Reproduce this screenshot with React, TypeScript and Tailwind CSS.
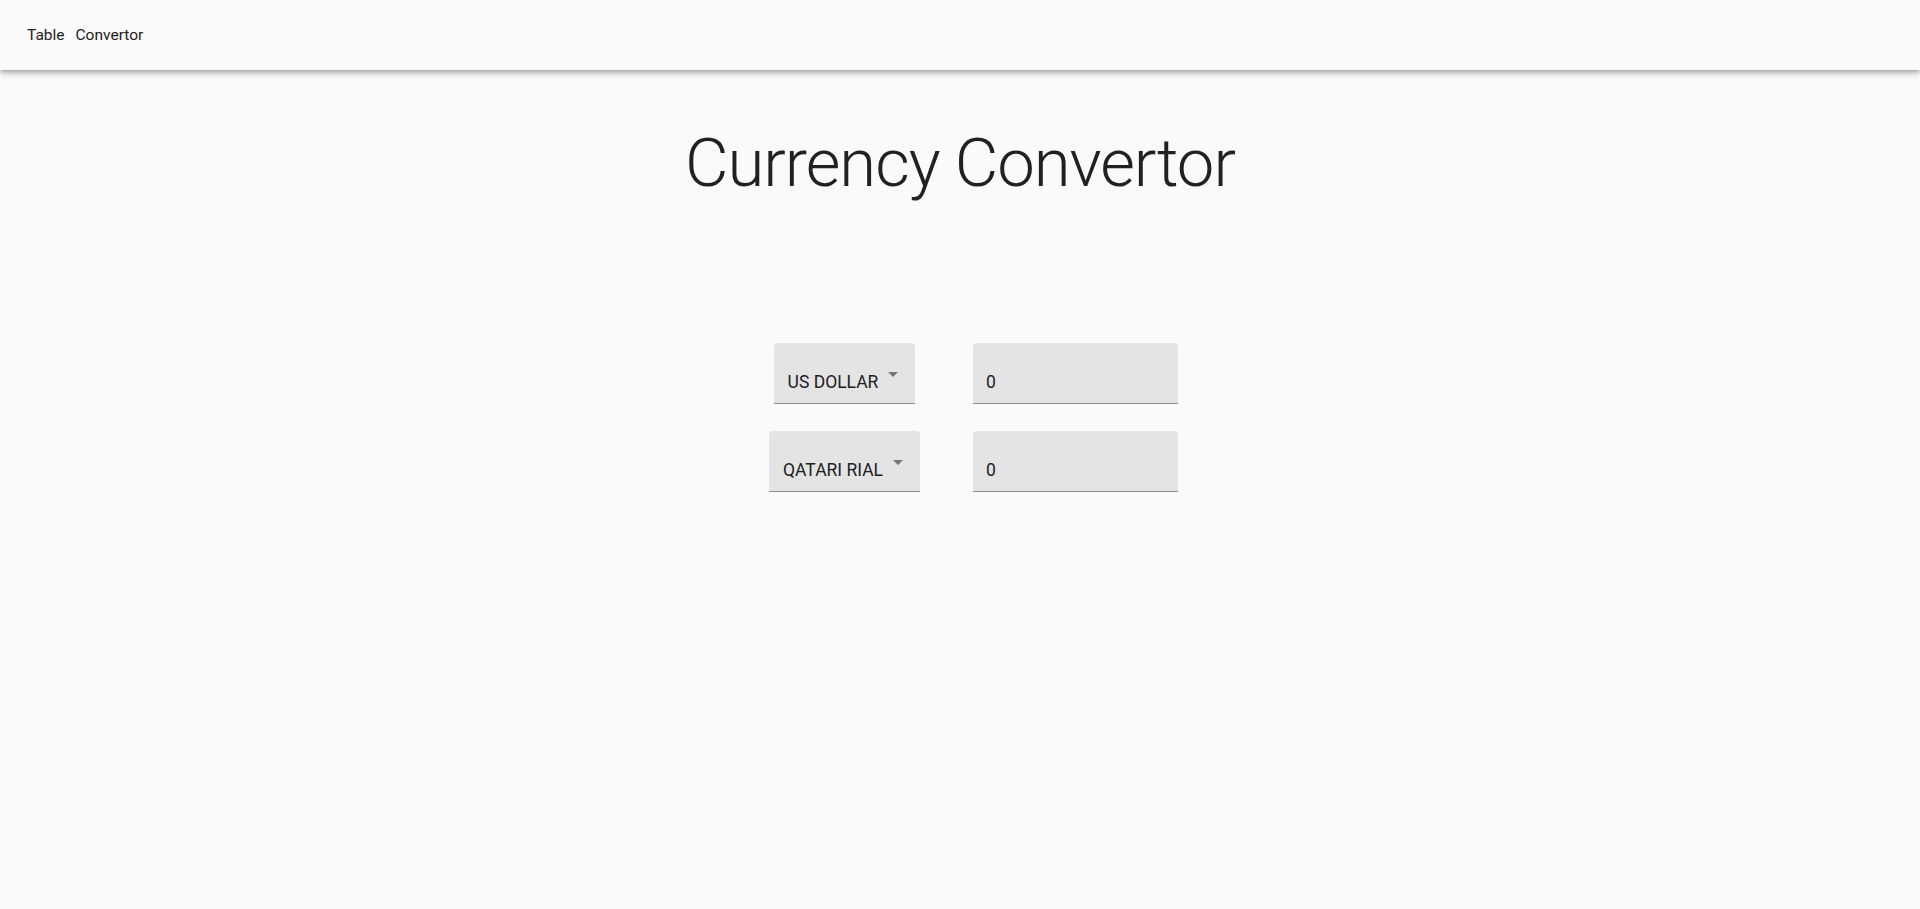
import { useState } from "react";

const currencies = ["US DOLLAR", "QATARI RIAL"];

function ArrowDrop() {
  return (
    <svg viewBox="0 0 24 24" className="ml-[3px] mt-[19px] h-6 w-6 shrink-0 fill-[#757575]">
      <path d="M7 10l5 5 5-5z" />
    </svg>
  );
}

// filled select, MUI style: grey box, underline, caret on the right
function CurrencySelect({ value }: { value: string }) {
  return (
    <div className="flex h-[61px] cursor-pointer items-start rounded-t bg-[#e4e4e4] pl-[14px] pr-[10px] border-b border-[#919191]">
      <span className="block pt-[27px] text-[17.5px] leading-[24px] text-[#212121]">{value}</span>
      <ArrowDrop />
    </div>
  );
}

function AmountInput({ value, onChange }: { value: string; onChange: (v: string) => void }) {
  return (
    <div className="h-[61px] w-[205px] rounded-t bg-[#e4e4e4] border-b border-[#919191]">
      <input
        value={value}
        onChange={(e) => onChange(e.target.value)}
        className="block w-full bg-transparent pl-[13px] pr-3 pt-[27px] text-[17.5px] leading-[24px] text-[#212121] outline-none"
      />
    </div>
  );
}

export default function App() {
  const [from, setFrom] = useState("0");
  const [to, setTo] = useState("0");

  return (
    <div className="min-h-[909px] bg-[#fafafa] font-['Roboto','Liberation_Sans',sans-serif] text-[#212121]">
      {/* top bar */}
      <header className="flex h-[70px] items-center gap-[11px] bg-[#fafafa] px-[27px] pt-[2px] text-[15.5px] shadow-[0px_2px_4px_-1px_rgba(0,0,0,0.2),0px_4px_5px_0px_rgba(0,0,0,0.14),0px_1px_10px_0px_rgba(0,0,0,0.12)]">
        <a className="cursor-pointer">Table</a>
        <a className="cursor-pointer">Convertor</a>
      </header>

      <main className="pt-[54px]">
        <h1 className="text-center text-[67px] font-light leading-[79px] tracking-[-0.01562em]">
          Currency Convertor
        </h1>

        <div className="mt-[140px] grid grid-cols-[231px_231px] justify-center justify-items-center gap-y-[27px]">
          <CurrencySelect value={currencies[0]} />
          <AmountInput value={from} onChange={setFrom} />
          <CurrencySelect value={currencies[1]} />
          <AmountInput value={to} onChange={setTo} />
        </div>
      </main>
    </div>
  );
}
